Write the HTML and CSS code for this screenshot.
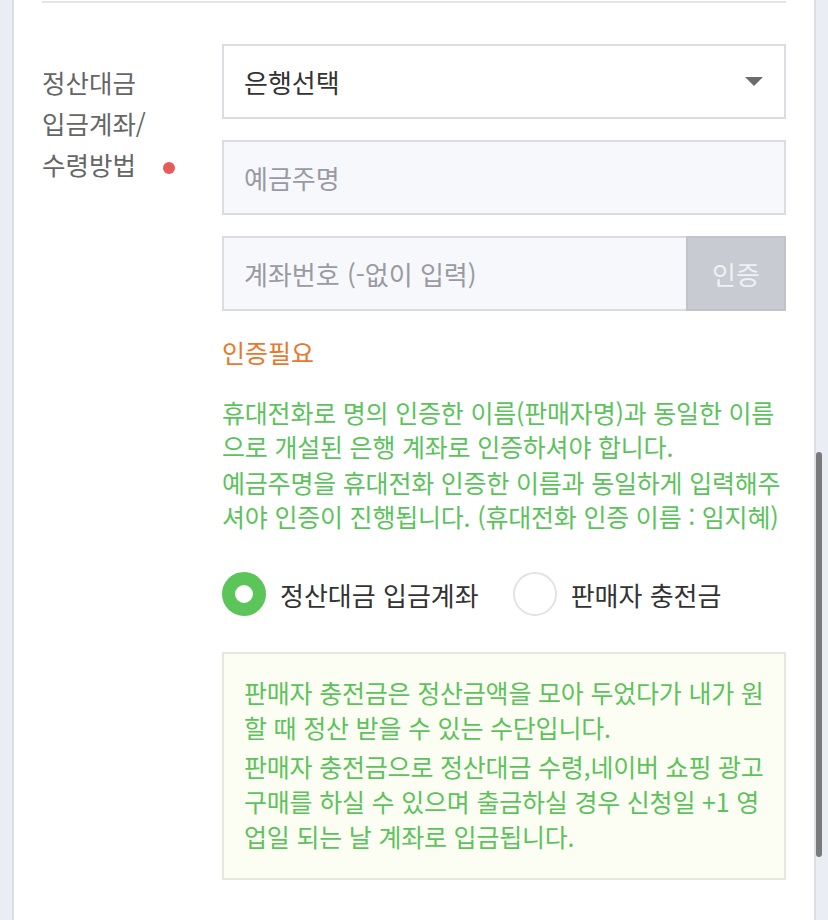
FILE: index.html
```html
<!DOCTYPE html>
<html lang="ko">
<head>
    <meta charset="UTF-8">
    <title>정산대금 입금계좌</title>
    <link rel="stylesheet" href="styles.css">
</head>
<body>
<div id="page">
    <div id="panel">
        <div class="divider"></div>

        <div class="row">
            <div class="row-label">정산대금<br>입금계좌/<br>수령방법<span class="required"></span></div>

            <div class="row-body">
                <div class="select">
                    <span class="select-text">은행선택</span>
                    <span class="select-arrow"></span>
                </div>

                <input class="input" type="text" placeholder="예금주명">

                <div class="account">
                    <input class="input account-input" type="text" placeholder="계좌번호 (-없이 입력)">
                    <button class="btn-verify">인증</button>
                </div>

                <p class="status">인증필요</p>

                <div class="notice">
                    <p>휴대전화로 명의 인증한 이름(판매자명)과 동일한 이름으로 개설된 은행 계좌로 인증하셔야 합니다.</p>
                    <p>예금주명을 휴대전화 인증한 이름과 동일하게 입력해주셔야 인증이 진행됩니다. (휴대전화 인증 이름 : 임지혜)</p>
                </div>

                <ul class="radios">
                    <li class="checked"><span class="radio"></span>정산대금 입금계좌</li>
                    <li><span class="radio"></span>판매자 충전금</li>
                </ul>

                <div class="info-box">
                    <p>판매자 충전금은 정산금액을 모아 두었다가 내가 원할 때 정산 받을 수 있는 수단입니다.</p>
                    <p>판매자 충전금으로 정산대금 수령,네이버 쇼핑 광고 구매를 하실 수 있으며 출금하실 경우 신청일 +1 영업일 되는 날 계좌로 입금됩니다.</p>
                </div>
            </div>
        </div>
    </div>

    <div class="scroll-thumb"></div>
</div>
</body>
</html>
```

FILE: styles.css
```css
*{
    margin: 0;
    padding: 0;
    box-sizing: border-box;
}
body{
    background: #eaedf3;
    font-family: "Noto Sans CJK KR", "Noto Sans", sans-serif;
    font-size: 26px;
    color: #333;
}
#page{
    position: relative;
    height: 920px;
    padding: 0 12px;
    overflow: hidden;
}
#panel{
    height: 100%;
    background: #fff;
    border-left: 2px solid #dcdfe4;
    border-right: 2px solid #dcdfe4;
    padding: 1px 28px 0;
}
.divider{
    height: 2px;
    background: #e3e5e9;
}
.row{
    display: flex;
    margin-top: 41px;
}
.row-label{
    width: 180px;
    flex-shrink: 0;
    padding-top: 17px;
    line-height: 41px;
    font-size: 25.5px;
    color: #666;
}
.required{
    display: inline-block;
    width: 12px;
    height: 12px;
    border-radius: 50%;
    background: #e85b5b;
    margin-left: 27px;
    vertical-align: middle;
}
.row-body{
    flex: 1;
    min-width: 0;
}
.select{
    display: flex;
    align-items: center;
    justify-content: space-between;
    height: 75px;
    border: 2px solid #dcdde2;
    padding: 0 21px 0 20px;
    background: #fff;
}
.select-arrow{
    width: 0;
    height: 0;
    border-left: 9px solid transparent;
    border-right: 9px solid transparent;
    border-top: 9px solid #6b6b70;
}
.input{
    display: block;
    width: 100%;
    height: 75px;
    margin-top: 21px;
    border: 2px solid #dcdde2;
    background: #f7f8fc;
    padding: 0 20px;
    font: inherit;
    color: #333;
    outline: none;
}
.input::placeholder{
    color: #9a9aa2;
}
.account{
    display: flex;
    margin-top: 21px;
}
.account .account-input{
    margin-top: 0;
    flex: 1;
    border-right: none;
}
.btn-verify{
    width: 100px;
    height: 75px;
    border: 2px solid #c0c3c9;
    background: #c8cbd1;
    color: #f0f1f4;
    font: inherit;
}
.status{
    margin-top: 24px;
    line-height: 35px;
    font-size: 25px;
    color: #e8782c;
}
.notice{
    margin-top: 25px;
    color: #5cc35c;
    font-size: 25px;
    letter-spacing: -0.2px;
    line-height: 34px;
    word-break: break-all;
}
.notice p + p{
    margin-top: 2px;
}
.radios{
    display: flex;
    align-items: center;
    margin-top: 39px;
    list-style: none;
}
.radios li{
    display: flex;
    align-items: center;
    margin-right: 34px;
}
.radio{
    width: 44px;
    height: 44px;
    border-radius: 50%;
    border: 2px solid #e3e3e3;
    margin-right: 14px;
}
.radios .checked .radio{
    border: 13px solid #5bc55a;
}
.info-box{
    margin-top: 36px;
    border: 2px solid #e6e7dd;
    background: #fdfef3;
    padding: 21px 16px 24px 20px;
    color: #5cc35c;
    font-size: 25px;
    letter-spacing: -0.2px;
    line-height: 35px;
    word-break: break-all;
}
.info-box p + p{
    margin-top: 4px;
}
.scroll-thumb{
    position: absolute;
    right: 6px;
    top: 452px;
    width: 6px;
    height: 405px;
    border-radius: 3px;
    background: #7a7a7c;
}
```
